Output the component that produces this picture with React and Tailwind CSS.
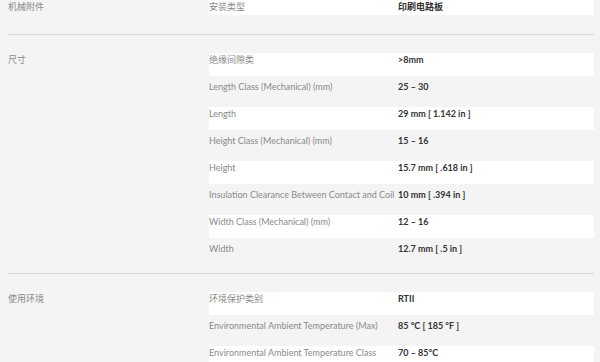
import React from "react";

const font = { fontFamily: "Lato, 'Noto Sans CJK SC', sans-serif" };

function Row({ label, value, white, band = "h-[23px]", row = "h-[27px]" }) {
  return (
    <div className={row}>
      <div className={`${band} flex items-start ${white ? "bg-white" : ""}`}>
        <div className="w-[189px] text-[9px] leading-[14px] text-[#8a8a8a]">{label}</div>
        <div className="flex-1 text-[9px] leading-[14px] font-bold text-[#333]">{value}</div>
      </div>
    </div>
  );
}

function Section({ title, rows, first }) {
  return (
    <div className="flex items-start">
      <div className="w-[209px] pl-[8px] text-[9px] leading-[14px] text-[#8a8a8a]">{title}</div>
      <div className="w-[385px]">
        {rows.map((r, i) =>
          first ? (
            <Row key={i} label={r[0]} value={r[1]} white band="h-[15px]" row="h-[15px]" />
          ) : (
            <Row key={i} label={r[0]} value={r[1]} white={i % 2 === 0} />
          )
        )}
      </div>
    </div>
  );
}

function Divider() {
  return <div className="ml-[7px] w-[587px] h-[1px] bg-[#dadada]" />;
}

export default function App() {
  return (
    <div className="w-[600px] h-[362px] overflow-hidden bg-[#f4f4f4]" style={font}>
      <div className="h-[34px]">
        <Section first title="机械附件" rows={[["安装类型", "印刷电路板"]]} />
      </div>
      <Divider />
      <div className="pt-[18px] pb-[4px]">
        <Section
          title="尺寸"
          rows={[
            ["绝缘间隙类", ">8mm"],
            ["Length Class (Mechanical) (mm)", "25 – 30"],
            ["Length", "29 mm [ 1.142 in ]"],
            ["Height Class (Mechanical) (mm)", "15 – 16"],
            ["Height", "15.7 mm [ .618 in ]"],
            ["Insulation Clearance Between Contact and Coil", "10 mm [ .394 in ]"],
            ["Width Class (Mechanical) (mm)", "12 – 16"],
            ["Width", "12.7 mm [ .5 in ]"],
          ]}
        />
      </div>
      <Divider />
      <div className="pt-[18px]">
        <Section
          title="使用环境"
          rows={[
            ["环境保护类别", "RTII"],
            ["Environmental Ambient Temperature (Max)", "85 °C [ 185 °F ]"],
            ["Environmental Ambient Temperature Class", "70 – 85°C"],
          ]}
        />
      </div>
    </div>
  );
}
